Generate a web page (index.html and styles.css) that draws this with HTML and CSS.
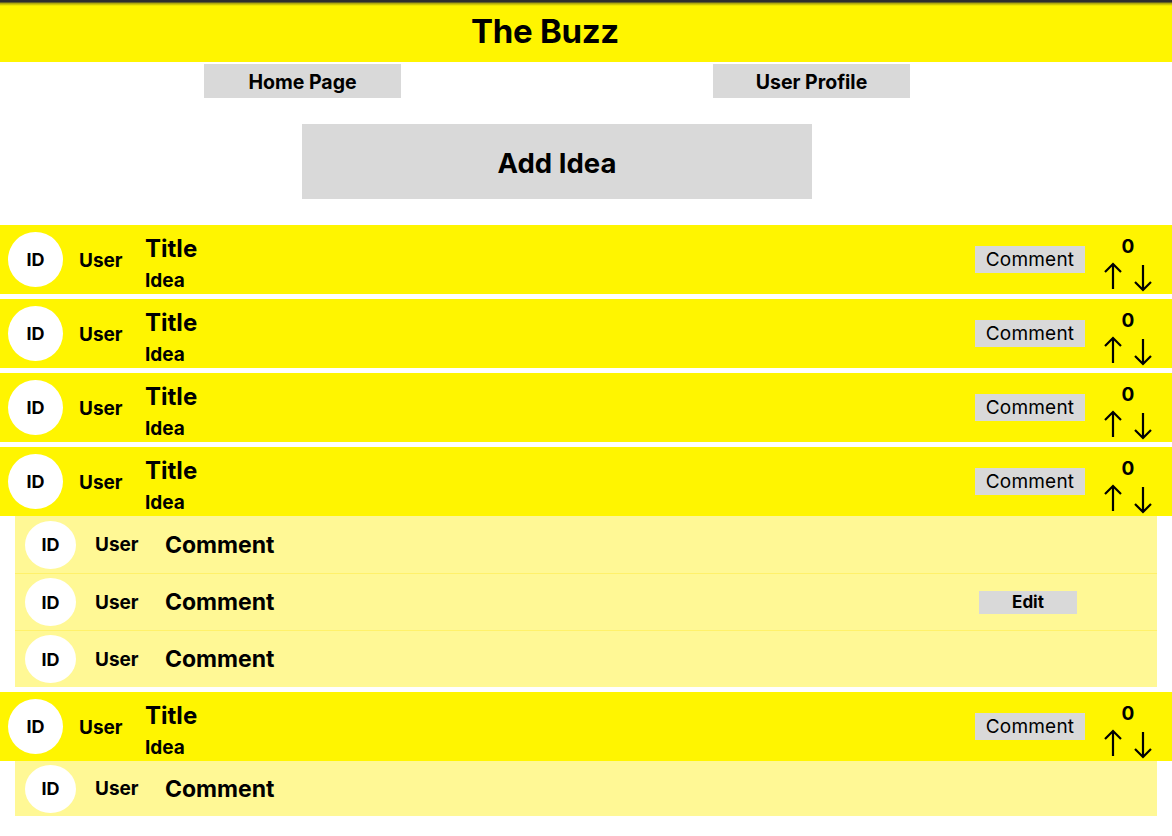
FILE: index.html
```html
<!DOCTYPE html>
<html lang="en">
<head>
<meta charset="utf-8">
<title>The Buzz</title>
<link rel="stylesheet" href="styles.css">
</head>
<body>
<header class="site-header"><h1 class="site-title">The Buzz</h1></header>

<nav class="nav">
  <button class="nav-btn">Home Page</button>
  <button class="nav-btn">User Profile</button>
</nav>

<div class="add-wrap"><button class="add-btn">Add Idea</button></div>

<main class="feed">
  <div class="thread">
    <div class="idea">
      <div class="avatar">ID</div>
      <div class="user">User</div>
      <div class="idea-text"><div class="idea-title">Title</div><div class="idea-body">Idea</div></div>
      <button class="comment-btn">Comment</button>
      <div class="vote"><div class="vote-count">0</div><div class="vote-arrows"><svg class="arrow up" viewBox="0 0 18 27"><path d="M9 27V2M1 10L9 2l8 8" fill="none" stroke="#000" stroke-width="2.2"/></svg><svg class="arrow down" viewBox="0 0 18 27"><path d="M9 0v25M1 17l8 8 8-8" fill="none" stroke="#000" stroke-width="2.2"/></svg></div></div>
    </div>
  </div>
  <div class="thread">
    <div class="idea">
      <div class="avatar">ID</div>
      <div class="user">User</div>
      <div class="idea-text"><div class="idea-title">Title</div><div class="idea-body">Idea</div></div>
      <button class="comment-btn">Comment</button>
      <div class="vote"><div class="vote-count">0</div><div class="vote-arrows"><svg class="arrow up" viewBox="0 0 18 27"><path d="M9 27V2M1 10L9 2l8 8" fill="none" stroke="#000" stroke-width="2.2"/></svg><svg class="arrow down" viewBox="0 0 18 27"><path d="M9 0v25M1 17l8 8 8-8" fill="none" stroke="#000" stroke-width="2.2"/></svg></div></div>
    </div>
  </div>
  <div class="thread">
    <div class="idea">
      <div class="avatar">ID</div>
      <div class="user">User</div>
      <div class="idea-text"><div class="idea-title">Title</div><div class="idea-body">Idea</div></div>
      <button class="comment-btn">Comment</button>
      <div class="vote"><div class="vote-count">0</div><div class="vote-arrows"><svg class="arrow up" viewBox="0 0 18 27"><path d="M9 27V2M1 10L9 2l8 8" fill="none" stroke="#000" stroke-width="2.2"/></svg><svg class="arrow down" viewBox="0 0 18 27"><path d="M9 0v25M1 17l8 8 8-8" fill="none" stroke="#000" stroke-width="2.2"/></svg></div></div>
    </div>
  </div>
  <div class="thread">
    <div class="idea">
      <div class="avatar">ID</div>
      <div class="user">User</div>
      <div class="idea-text"><div class="idea-title">Title</div><div class="idea-body">Idea</div></div>
      <button class="comment-btn">Comment</button>
      <div class="vote"><div class="vote-count">0</div><div class="vote-arrows"><svg class="arrow up" viewBox="0 0 18 27"><path d="M9 27V2M1 10L9 2l8 8" fill="none" stroke="#000" stroke-width="2.2"/></svg><svg class="arrow down" viewBox="0 0 18 27"><path d="M9 0v25M1 17l8 8 8-8" fill="none" stroke="#000" stroke-width="2.2"/></svg></div></div>
    </div>
    <div class="comments">
      <div class="comment">
        <div class="c-avatar">ID</div>
        <div class="c-user">User</div>
        <div class="c-text">Comment</div>
      </div>
      <div class="comment">
        <div class="c-avatar">ID</div>
        <div class="c-user">User</div>
        <div class="c-text">Comment</div>
        <button class="edit-btn">Edit</button>
      </div>
      <div class="comment">
        <div class="c-avatar">ID</div>
        <div class="c-user">User</div>
        <div class="c-text">Comment</div>
      </div>
    </div>
  </div>
  <div class="thread">
    <div class="idea">
      <div class="avatar">ID</div>
      <div class="user">User</div>
      <div class="idea-text"><div class="idea-title">Title</div><div class="idea-body">Idea</div></div>
      <button class="comment-btn">Comment</button>
      <div class="vote"><div class="vote-count">0</div><div class="vote-arrows"><svg class="arrow up" viewBox="0 0 18 27"><path d="M9 27V2M1 10L9 2l8 8" fill="none" stroke="#000" stroke-width="2.2"/></svg><svg class="arrow down" viewBox="0 0 18 27"><path d="M9 0v25M1 17l8 8 8-8" fill="none" stroke="#000" stroke-width="2.2"/></svg></div></div>
    </div>
    <div class="comments">
      <div class="comment comment--short">
        <div class="c-avatar">ID</div>
        <div class="c-user">User</div>
        <div class="c-text">Comment</div>
      </div>
    </div>
  </div>
</main>
</body>
</html>
```

FILE: styles.css
```css
* { box-sizing: border-box; }

html, body {
  margin: 0;
  padding: 0;
  background: #ffffff;
}

body {
  font-family: "Inter", "Liberation Sans", sans-serif;
  color: #000;
  width: 1172px;
  height: 836px;
  overflow: hidden;
}

button {
  font-family: inherit;
  color: #000;
  border: none;
  margin: 0;
  padding: 0;
  cursor: pointer;
}

/* Header */
.site-header {
  height: 62px;
  background: linear-gradient(#2e2e2e 0, #2e2e2e 2px, #a09a10 3px, #fff500 6px, #fff500 100%);
  display: flex;
  align-items: center;
  justify-content: center;
  padding: 1px 82px 0 0;
}

.site-title {
  margin: 0;
  font-size: 33px;
  font-weight: 700;
  line-height: 1;
  letter-spacing: -0.3px;
}

/* Nav */
.nav {
  display: flex;
  justify-content: center;
  gap: 312px;
  padding: 2px 58px 0 0;
}

.nav-btn {
  width: 197px;
  height: 34px;
  background: #d9d9d9;
  font-size: 19.5px;
  font-weight: 700;
  padding-top: 1px;
}

/* Add idea */
.add-wrap {
  display: flex;
  justify-content: center;
  padding: 26px 58px 26px 0;
}

.add-btn {
  width: 510px;
  height: 75px;
  background: #d9d9d9;
  font-size: 27.5px;
  font-weight: 700;
  padding-top: 2px;
}

/* Feed */
.feed {
  display: flex;
  flex-direction: column;
  gap: 5px;
}

.thread {
  display: flex;
  flex-direction: column;
}

.idea {
  height: 69px;
  background: #fff500;
  display: flex;
  align-items: center;
  padding: 0 17px 0 8px;
}

.avatar {
  width: 55px;
  height: 55px;
  border-radius: 50%;
  background: #fff;
  display: flex;
  align-items: center;
  justify-content: center;
  font-size: 18px;
  font-weight: 700;
  flex: none;
}

.user {
  margin-left: 16px;
  width: 66px;
  font-size: 19px;
  font-weight: 700;
  padding-top: 2px;
  flex: none;
}

.idea-text {
  flex: 1;
  align-self: flex-start;
  display: flex;
  flex-direction: column;
  padding-top: 10px;
}

.idea-title {
  font-size: 24px;
  font-weight: 700;
  line-height: 28px;
}

.idea-body {
  font-size: 19px;
  font-weight: 700;
  line-height: 24px;
  margin-top: 6px;
}

.comment-btn {
  width: 110px;
  height: 27px;
  background: #d9d9d9;
  font-size: 19px;
  font-weight: 400;
  letter-spacing: 0.2px;
  margin-right: 16px;
}

.vote {
  width: 54px;
  align-self: flex-start;
  display: flex;
  flex-direction: column;
  align-items: center;
  padding-top: 12px;
}

.vote-count {
  font-size: 19px;
  font-weight: 700;
  line-height: 20px;
}

.vote-arrows {
  display: flex;
  gap: 12px;
  margin-top: 5px;
  align-items: flex-start;
}

.arrow {
  width: 18px;
  height: 27px;
  display: block;
}

.arrow.down {
  margin-top: 3px;
}

/* Comments */
.comments {
  margin: 0 15px;
  background: #fff895;
  display: flex;
  flex-direction: column;
}

.comment {
  height: 57px;
  display: flex;
  align-items: center;
  padding: 0 80px 0 10px;
}

.comment + .comment {
  border-top: 1px solid #fff16a;
}

.comment--short {
  height: 55px;
}

.c-avatar {
  width: 51px;
  height: 48px;
  border-radius: 50%;
  background: #fff;
  display: flex;
  align-items: center;
  justify-content: center;
  font-size: 18px;
  font-weight: 700;
  flex: none;
}

.c-user {
  margin-left: 19px;
  width: 70px;
  font-size: 19px;
  font-weight: 700;
  flex: none;
}

.c-text {
  flex: 1;
  font-size: 23px;
  font-weight: 700;
}

.edit-btn {
  width: 98px;
  height: 23px;
  background: #d9d9d9;
  font-size: 17px;
  font-weight: 700;
}
```
